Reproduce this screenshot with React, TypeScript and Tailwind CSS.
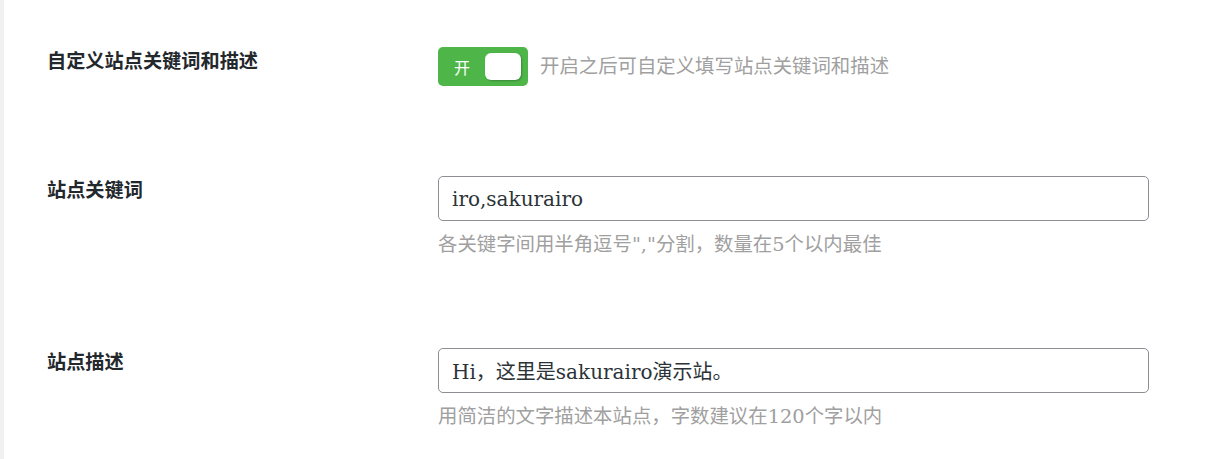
const cjk = "'Noto Sans CJK SC', 'Noto Sans', sans-serif";

const Label = ({ children }: { children: React.ReactNode }) => (
  <div
    className="w-[391px] shrink-0 text-[19.2px] font-bold leading-[27px] text-[#23282d]"
    style={{ fontFamily: cjk }}
  >
    {children}
  </div>
);

const Hint = ({ children, className = "" }: { children: React.ReactNode; className?: string }) => (
  <p
    className={`text-[19.4px] leading-[26px] text-[#a0a0a0] font-['DejaVu_Serif','Noto_Sans_CJK_SC',serif] ${className}`}
  >
    {children}
  </p>
);

const TextInput = ({ value }: { value: string }) => (
  <input
    defaultValue={value}
    className="h-[45px] w-[711px] rounded-[5px] border border-[#8c8f94] bg-white px-[13px] text-[20px] text-[#2c3338] outline-none font-['DejaVu_Serif','Noto_Sans_CJK_SC',serif]"
  />
);

export default function App() {
  const on = true;

  return (
    <div className="flex min-h-[459px] w-full bg-white">
      <div className="w-[4px] shrink-0 bg-[#f1f1f1]" />
      <div className="flex flex-col gap-[90px] pl-[43px] pt-[47px]">
        {/* toggle row */}
        <div className="flex">
          <Label>自定义站点关键词和描述</Label>
          <div className="flex items-center gap-3">
            <button className="flex h-[39px] w-[90px] items-center justify-between rounded-[5px] bg-[#4eb548] pl-[16px] pr-[7px]">
              <span className="text-[16px] text-white" style={{ fontFamily: cjk }}>
                {on ? "开" : "关"}
              </span>
              <span className="h-[27px] w-[36px] rounded-[6px] bg-white shadow-[1px_1px_2px_rgba(0,0,0,0.25)]" />
            </button>
            <Hint>开启之后可自定义填写站点关键词和描述</Hint>
          </div>
        </div>

        <div className="flex">
          <Label>站点关键词</Label>
          <div className="flex flex-col">
            <TextInput value="iro,sakurairo" />
            <Hint className="mt-[11px]">各关键字间用半角逗号","分割，数量在5个以内最佳</Hint>
          </div>
        </div>

        <div className="flex">
          <Label>站点描述</Label>
          <div className="flex flex-col">
            <TextInput value="Hi，这里是sakurairo演示站。" />
            <Hint className="mt-[11px]">用简洁的文字描述本站点，字数建议在120个字以内</Hint>
          </div>
        </div>
      </div>
    </div>
  );
}
